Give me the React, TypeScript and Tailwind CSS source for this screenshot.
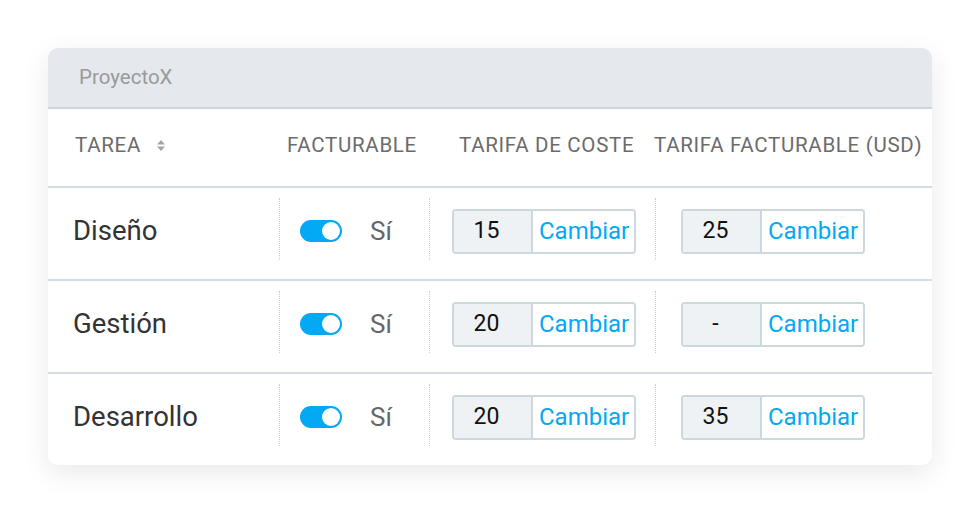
const rows = [
  { name: "Diseño", cost: "15", bill: "25" },
  { name: "Gestión", cost: "20", bill: "-" },
  { name: "Desarrollo", cost: "20", bill: "35" },
];

const SortIcon = () => (
  <svg width="10" height="13" viewBox="0 0 10 13" className="ml-[15px]">
    <path d="M5 1 L9 5.5 H1 Z" fill="#a3a3a3" />
    <path d="M5 12 L9 7.5 H1 Z" fill="#a3a3a3" />
  </svg>
);

const Toggle = () => (
  <div className="w-[42px] h-[22px] rounded-full bg-[#03a9f4] flex items-center justify-end pr-[2px]">
    <div className="w-[18px] h-[18px] rounded-full bg-white" />
  </div>
);

const RateInput = (props: { value: string }) => (
  <div className="flex h-[45px] rounded-[4px] border-2 border-[#cdd7de] overflow-hidden">
    <div className="w-[79px] bg-[#eef2f5] border-r-2 border-[#cdd7de] flex items-center justify-center pr-[12px] text-[23px] text-[#111]">
      {props.value}
    </div>
    <div className="w-[101px] bg-white flex items-center pl-[6px] text-[24px] text-[#03a9f4]">
      Cambiar
    </div>
  </div>
);

export default function App() {
  return (
    <div className="min-h-[512px] bg-white p-12" style={{ fontFamily: "Roboto, 'Liberation Sans', sans-serif" }}>
      <div className="w-[884px] rounded-[10px] overflow-hidden bg-white shadow-[0_8px_28px_rgba(0,0,0,0.09)]">
        <div className="h-[61px] bg-[#e5e9ed] border-b-2 border-[#cbd6dd] flex items-center pl-[31px] text-[20.5px] text-[#9a9a9a]">
          ProyectoX
        </div>
        <div className="grid grid-cols-[231px_150px_226px_1fr] h-[77px] items-center pb-[4px] text-[20.5px] tracking-[0.7px] text-[#6b6b6b]">
          <div className="pl-[27px] flex items-center">
            TAREA
            <SortIcon />
          </div>
          <div className="pl-[8px]">FACTURABLE</div>
          <div className="pl-[30px]">TARIFA DE COSTE</div>
          <div className="whitespace-nowrap -ml-px">TARIFA FACTURABLE (USD)</div>
        </div>
        {rows.map((r) => (
          <div key={r.name} className="grid grid-cols-[231px_150px_226px_1fr] h-[93px] border-t-2 border-[#d3dce2] items-start">
            <div className="h-[62px] mt-[10px] pt-[4px] flex items-center pl-[25px] text-[27.5px] text-[#333]">
              {r.name}
            </div>
            <div className="h-[62px] mt-[10px] pt-[4px] flex items-center pl-5 border-l border-dotted border-[#c5d0d8]">
              <Toggle />
              <span className="ml-[28px] text-[26px] text-[#666]">Sí</span>
            </div>
            <div className="h-[62px] mt-[10px] pt-[4px] flex items-center pl-[22px] border-l border-dotted border-[#c5d0d8]">
              <RateInput value={r.cost} />
            </div>
            <div className="h-[62px] mt-[10px] pt-[4px] flex items-center pl-[25px] border-l border-dotted border-[#c5d0d8]">
              <RateInput value={r.bill} />
            </div>
          </div>
        ))}
      </div>
    </div>
  );
}
